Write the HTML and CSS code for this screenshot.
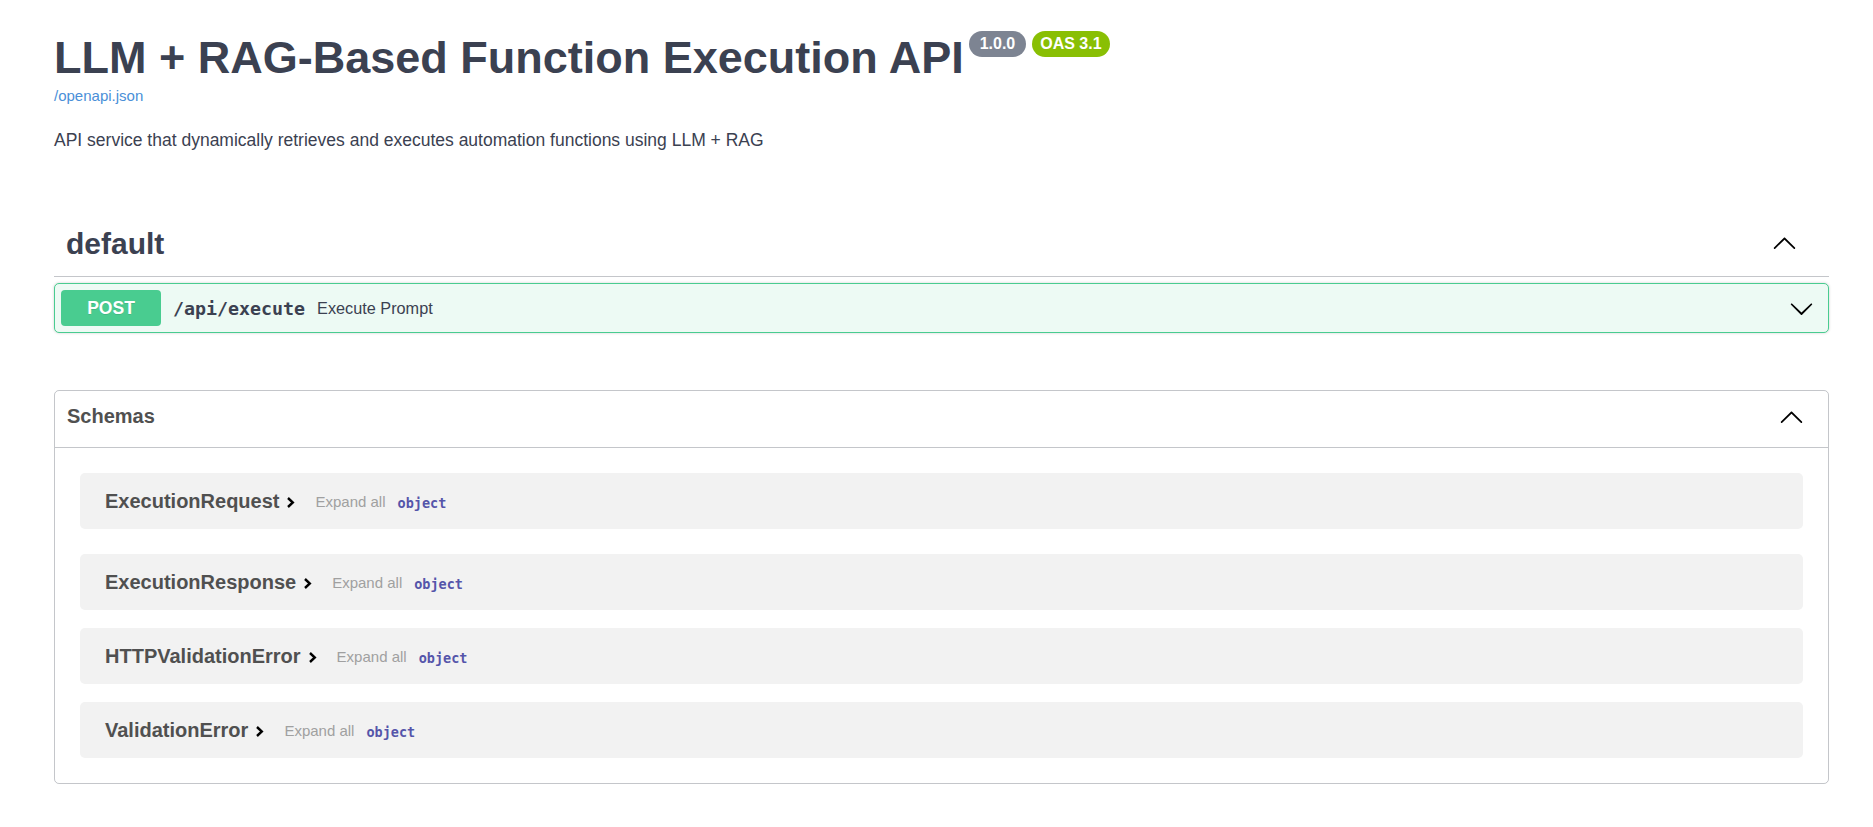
FILE: index.html
```html
<!DOCTYPE html>
<html lang="en">
<head>
<meta charset="utf-8">
<title>LLM + RAG-Based Function Execution API - Swagger UI</title>
<link rel="stylesheet" href="styles.css">
</head>
<body>
<div class="wrapper">
  <div class="info">
    <h2 class="title">
      <span class="title-text">LLM + RAG-Based Function Execution API</span>
      <small class="badge badge-version">1.0.0</small>
      <small class="badge badge-oas">OAS 3.1</small>
    </h2>
    <a class="spec-link" href="#">/openapi.json</a>
    <p class="description">API service that dynamically retrieves and executes automation functions using LLM + RAG</p>
  </div>

  <section class="tag-section">
    <div class="tag-header">
      <h3 class="tag-name">default</h3>
      <svg class="arrow arrow-tag" viewBox="0 0 20 20" width="25" height="25"><path d="M17.418 14.908c.272.268.709.268.979 0s.271-.701 0-.969l-7.908-7.83c-.27-.268-.707-.268-.979 0l-7.908 7.83c-.27.268-.27.701 0 .969.271.268.709.268.979 0L10 7.767l7.418 7.141z"/></svg>
    </div>
    <div class="opblock">
      <span class="method">POST</span>
      <span class="op-path">/api/execute</span>
      <span class="op-desc">Execute Prompt</span>
      <svg class="arrow arrow-op" viewBox="0 0 20 20" width="25" height="25"><path d="M17.418 6.109c.272-.268.709-.268.979 0s.271.701 0 .969l-7.908 7.83c-.27.268-.707.268-.979 0l-7.908-7.830c-.27-.268-.27-.701 0-.969.271-.268.709-.268.979 0L10 13.25l7.418-7.141z"/></svg>
    </div>
  </section>

  <section class="models">
    <div class="models-header">
      <h4 class="models-title">Schemas</h4>
      <svg class="arrow arrow-models" viewBox="0 0 20 20" width="25" height="25"><path d="M17.418 14.908c.272.268.709.268.979 0s.271-.701 0-.969l-7.908-7.83c-.27-.268-.707-.268-.979 0l-7.908 7.83c-.27.268-.27.701 0 .969.271.268.709.268.979 0L10 7.767l7.418 7.141z"/></svg>
    </div>
    <div class="model-list">
      <div class="model-container">
        <span class="model-title">ExecutionRequest</span>
        <svg class="model-toggle" viewBox="0 0 9 13" width="9" height="13"><polyline points="2,2 6.8,6.5 2,11" fill="none" stroke="#000" stroke-width="2.4"/></svg>
        <span class="expand-all">Expand all</span>
        <span class="prop-type">object</span>
      </div>
      <div class="model-container">
        <span class="model-title">ExecutionResponse</span>
        <svg class="model-toggle" viewBox="0 0 9 13" width="9" height="13"><polyline points="2,2 6.8,6.5 2,11" fill="none" stroke="#000" stroke-width="2.4"/></svg>
        <span class="expand-all">Expand all</span>
        <span class="prop-type">object</span>
      </div>
      <div class="model-container">
        <span class="model-title">HTTPValidationError</span>
        <svg class="model-toggle" viewBox="0 0 9 13" width="9" height="13"><polyline points="2,2 6.8,6.5 2,11" fill="none" stroke="#000" stroke-width="2.4"/></svg>
        <span class="expand-all">Expand all</span>
        <span class="prop-type">object</span>
      </div>
      <div class="model-container">
        <span class="model-title">ValidationError</span>
        <svg class="model-toggle" viewBox="0 0 9 13" width="9" height="13"><polyline points="2,2 6.8,6.5 2,11" fill="none" stroke="#000" stroke-width="2.4"/></svg>
        <span class="expand-all">Expand all</span>
        <span class="prop-type">object</span>
      </div>
    </div>
  </section>
</div>
</body>
</html>
```

FILE: styles.css
```css
html, body {
  margin: 0;
  padding: 0;
  background: #fff;
}

body {
  font-family: "Liberation Sans", Arial, sans-serif;
  color: #3b4151;
}

.wrapper {
  margin-left: 54px;
  width: 1775px;
}

/* ---------- info ---------- */
.info {
  padding-top: 32px;
}

.title {
  display: flex;
  align-items: flex-start;
  margin: 0;
  font-size: 45px;
  line-height: 52px;
  font-weight: 700;
  color: #3b4151;
}

.badge {
  display: inline-block;
  margin-top: -1px;
  padding: 3px 9px;
  border-radius: 57px;
  font-size: 16px;
  line-height: 20px;
  font-weight: 700;
  color: #fff;
}

.badge-version {
  margin-left: 5px;
  padding: 3px 11px;
  background: #7d8492;
}

.badge-oas {
  margin-left: 6px;
  padding: 3px 8px;
  background: #89bf04;
}

.spec-link {
  display: block;
  margin-top: 3px;
  font-size: 15px;
  line-height: 17px;
  color: #4a8fd8;
  text-decoration: none;
}

.description {
  margin: 26px 0 0;
  font-size: 17.5px;
  line-height: 20px;
  color: #3b4151;
}

/* ---------- tag ---------- */
.tag-section {
  margin-top: 62px;
}

.tag-header {
  display: flex;
  align-items: center;
  height: 64px;
  padding: 0 32px 0 12px;
  border-bottom: 1px solid rgba(59, 65, 81, 0.3);
}

.tag-name {
  flex: 1;
  margin: 0;
  font-size: 30px;
  font-weight: 700;
  color: #3b4151;
}

.arrow {
  display: block;
  flex: none;
  fill: #000;
}

.arrow-tag {
  margin-top: -3px;
}

.opblock {
  display: flex;
  align-items: center;
  margin-top: 6px;
  padding: 6px;
  border: 1px solid #49cc90;
  border-radius: 5px;
  background: #edfaf4;
  box-shadow: 0 0 3px rgba(0, 0, 0, 0.19);
}

.method {
  width: 100px;
  height: 36px;
  line-height: 36px;
  border-radius: 4px;
  background: #49cc90;
  color: #fff;
  text-align: center;
  font-size: 17.5px;
  font-weight: 700;
  text-shadow: 0 1px 0 rgba(0, 0, 0, 0.1);
}

.op-path {
  padding: 0 12px;
  font-family: "DejaVu Sans Mono", "Liberation Mono", monospace;
  font-size: 18.3px;
  font-weight: 700;
  color: #3b4151;
}

.op-desc {
  flex: 1;
  font-size: 16.25px;
  color: #3b4151;
}

.arrow-op {
  margin-right: 8px;
}

/* ---------- models ---------- */
.models {
  margin-top: 57px;
  border: 1px solid rgba(59, 65, 81, 0.3);
  border-radius: 5px;
}

.models-header {
  display: flex;
  align-items: center;
  height: 56px;
  padding: 0 24px 0 12px;
  border-bottom: 1px solid rgba(59, 65, 81, 0.3);
}

.models-title {
  flex: 1;
  margin: 0 0 6px;
  font-size: 20px;
  font-weight: 700;
  color: #505050;
}

.arrow-models {
  margin-top: -5px;
}

.model-list {
  display: flex;
  flex-direction: column;
  gap: 18px;
  padding: 25px;
}

.model-container {
  display: flex;
  align-items: center;
  height: 56px;
  padding: 0 25px;
  border-radius: 5px;
  background: #f2f2f2;
}

.model-container:first-child {
  margin-bottom: 7px;
}

.model-title {
  font-size: 20px;
  font-weight: 700;
  color: #505050;
}

.model-toggle {
  display: block;
  margin: 2px 0 0 7px;
}

.expand-all {
  margin-left: 20px;
  font-size: 15px;
  color: #a0a0a0;
}

.prop-type {
  margin-left: 12px;
  margin-top: 3px;
  font-family: "DejaVu Sans Mono", "Liberation Mono", monospace;
  font-size: 13.5px;
  font-weight: 700;
  color: #55a;
}
```
